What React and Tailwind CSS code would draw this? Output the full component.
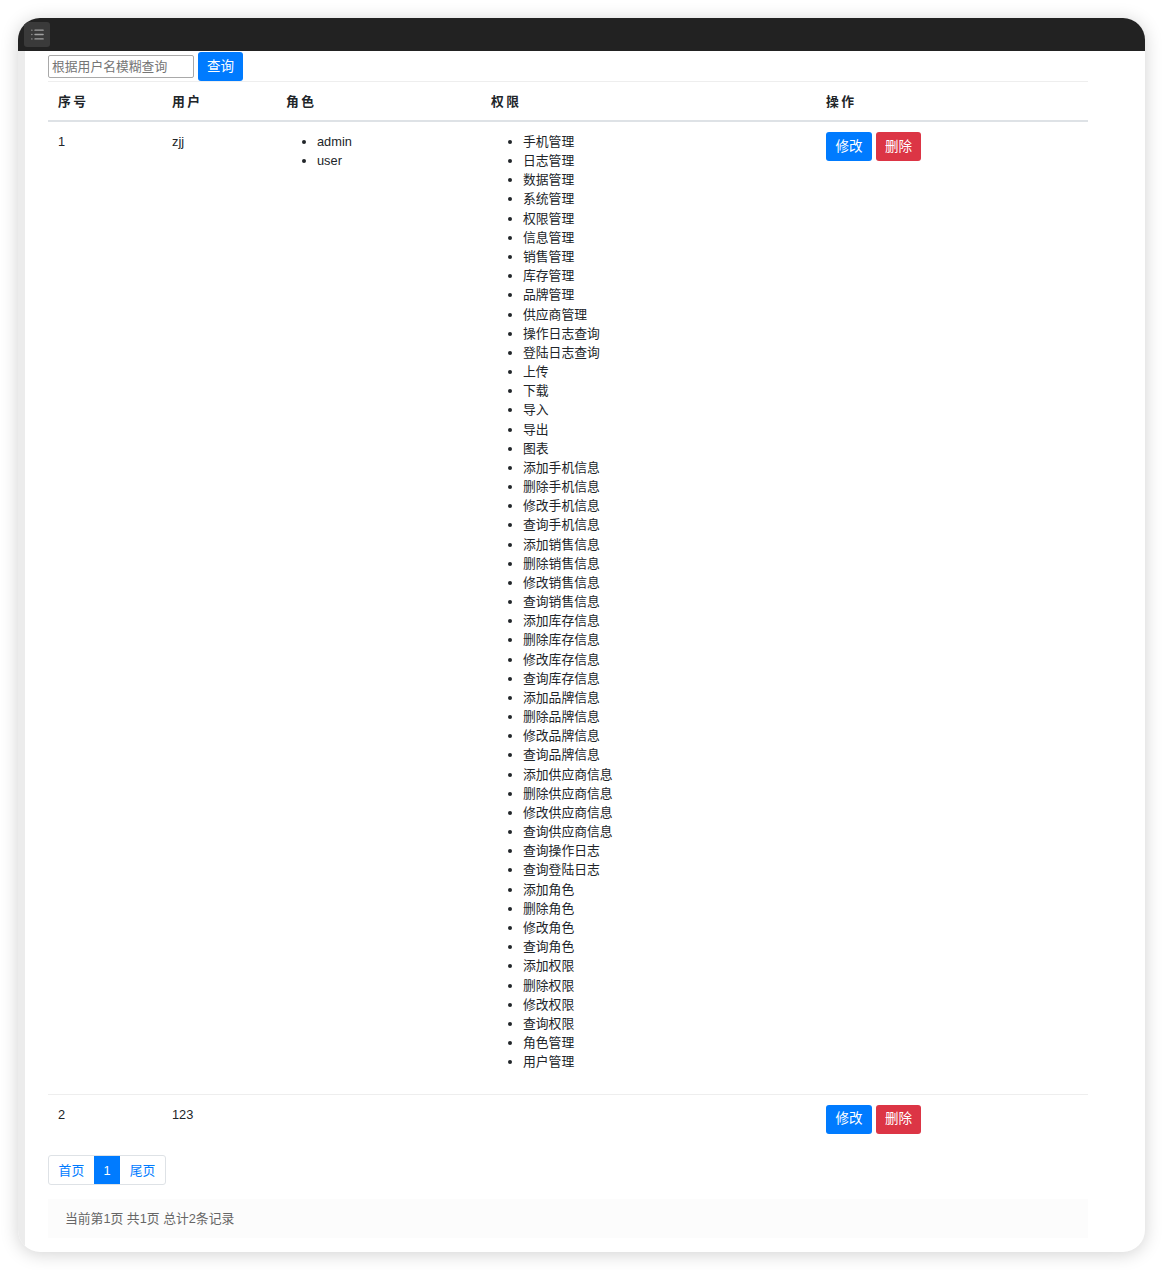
import { List } from "lucide-react";

const perms = [
  "手机管理", "日志管理", "数据管理", "系统管理", "权限管理", "信息管理", "销售管理", "库存管理",
  "品牌管理", "供应商管理", "操作日志查询", "登陆日志查询", "上传", "下载", "导入", "导出", "图表",
  "添加手机信息", "删除手机信息", "修改手机信息", "查询手机信息",
  "添加销售信息", "删除销售信息", "修改销售信息", "查询销售信息",
  "添加库存信息", "删除库存信息", "修改库存信息", "查询库存信息",
  "添加品牌信息", "删除品牌信息", "修改品牌信息", "查询品牌信息",
  "添加供应商信息", "删除供应商信息", "修改供应商信息", "查询供应商信息",
  "查询操作日志", "查询登陆日志", "添加角色", "删除角色", "修改角色", "查询角色",
  "添加权限", "删除权限", "修改权限", "查询权限", "角色管理", "用户管理",
];

const users = [
  { id: 1, name: "zjj", roles: ["admin", "user"], perms },
  { id: 2, name: "123", roles: [], perms: [] },
];

function Actions() {
  return (
    <div className="flex gap-[4px]">
      <button className="h-[29px] w-[46px] rounded-[3px] bg-[#007bff] text-[13.5px] text-white">修改</button>
      <button className="h-[29px] w-[45px] rounded-[3px] bg-[#dc3545] text-[13.5px] text-white">删除</button>
    </div>
  );
}

export default function App() {
  return (
    <div
      className="min-h-[1270px] bg-white p-[18px] text-[12.8px] leading-[19.17px] text-[#212529]"
      style={{ fontFamily: '"Liberation Sans", "Noto Sans CJK SC", sans-serif' }}
    >
      <div className="flex h-[1234px] w-[1127px] flex-col overflow-hidden rounded-[22px] bg-white shadow-[0_2px_18px_rgba(0,0,0,0.18)]">
        <div className="flex h-[33px] shrink-0 items-start bg-[#222222] pl-[6px] pt-[4px]">
          <div className="flex h-[25px] w-[26px] items-center justify-center rounded-[3px] bg-[#3a3a3a]">
            <List size={15} strokeWidth={2.2} className="text-[#a0a0a0]" />
          </div>
        </div>
        <div className="flex flex-1">
          <div className="w-[7px] shrink-0 bg-[#ececec]" />
          <div className="flex-1 pl-[23px] pr-[57px]">
            <div className="flex items-center gap-[4px] pt-[1px]">
              <input
                className="h-[23px] w-[146px] rounded-[2px] border border-[#a9a9a9] px-[3px] text-[12.8px] outline-none placeholder:text-[#757575]"
                placeholder="根据用户名模糊查询"
              />
              <button className="h-[29px] w-[45px] rounded-[3px] bg-[#007bff] text-[13.5px] text-white">查询</button>
            </div>
            <table className="w-full border-collapse border-t border-[#eeeeee]">
              <thead>
                <tr className="border-b-2 border-[#dee2e6] text-left font-bold tracking-[0.2em]">
                  <th className="w-[114px] px-[10px] py-[9.6px]">序号</th>
                  <th className="w-[114px] px-[10px] py-[9.6px]">用户</th>
                  <th className="w-[205px] px-[10px] py-[9.6px]">角色</th>
                  <th className="w-[335px] px-[10px] py-[9.6px]">权限</th>
                  <th className="px-[10px] py-[9.6px]">操作</th>
                </tr>
              </thead>
              <tbody>
                {users.map((u, i) => (
                  <tr key={u.id} className={i > 0 ? "border-t border-[#eeeeee]" : ""}>
                    <td className="px-[10px] py-[9.6px] align-top">{u.id}</td>
                    <td className="px-[10px] py-[9.6px] align-top">{u.name}</td>
                    <td className="px-[10px] py-[9.6px] align-top">
                      {u.roles.length > 0 && (
                        <ul className="list-disc pl-[31px]">
                          {u.roles.map((r) => (
                            <li key={r}>{r}</li>
                          ))}
                        </ul>
                      )}
                    </td>
                    <td className="px-[10px] py-[9.6px] align-top">
                      {u.perms.length > 0 && (
                        <ul className="mb-[13px] list-disc pl-[32px]">
                          {u.perms.map((p) => (
                            <li key={p}>{p}</li>
                          ))}
                        </ul>
                      )}
                    </td>
                    <td className="px-[10px] py-[9.6px] align-top">
                      <Actions />
                    </td>
                  </tr>
                ))}
              </tbody>
            </table>
            <div className="mt-[12px] flex">
              <div className="flex h-[30px] overflow-hidden rounded-[3px] border border-[#dee2e6]">
                <span className="flex items-center px-[9.6px] text-[#007bff]">首页</span>
                <span className="flex items-center bg-[#007bff] px-[9.6px] text-white">1</span>
                <span className="flex items-center px-[9.6px] text-[#007bff]">尾页</span>
              </div>
            </div>
            <div className="mt-[14px] flex h-[39px] items-center bg-[#fcfcfc] px-[17px] text-[#666666]">
              当前第1页 共1页 总计2条记录
            </div>
          </div>
        </div>
      </div>
    </div>
  );
}
